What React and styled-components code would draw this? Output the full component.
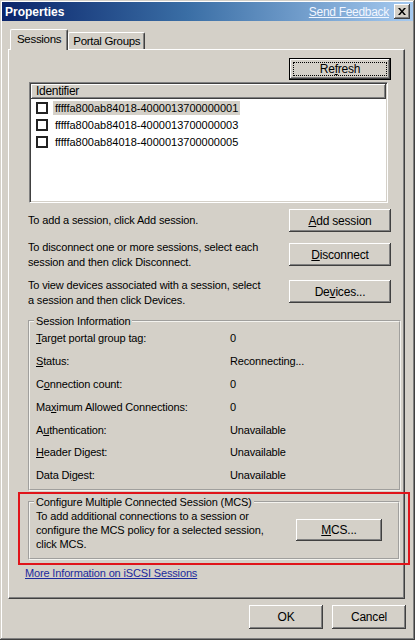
import React from 'react'
import styled, { createGlobalStyle } from 'styled-components'

const GlobalStyle = createGlobalStyle`
  html, body {
    margin: 0;
    padding: 0;
    background: #d4d0c8;
  }
  body {
    font-family: "Liberation Sans", Arial, sans-serif;
    font-size: 11px;
    letter-spacing: -0.15px;
    color: #000;
  }
`

const raised = `
  box-shadow: inset -1px -1px #404040, inset 1px 1px #ffffff,
    inset -2px -2px #808080, inset 2px 2px #d4d0c8;
`

const Window = styled.div`
  width: 415px;
  height: 640px;
  box-sizing: border-box;
  padding: 2px;
  background: #d4d0c8;
  display: flex;
  flex-direction: column;
  box-shadow: inset -1px -1px #404040, inset 1px 1px #d4d0c8,
    inset -2px -2px #808080, inset 2px 2px #ffffff;
`

const TitleBar = styled.div`
  height: 19px;
  display: flex;
  align-items: center;
  padding: 0 3px 0 3px;
  background: linear-gradient(to right, #0a246a 0%, #3a6ea5 45%, #a6caf0 100%);
`

const Title = styled.span`
  flex: 1;
  color: #fff;
  font-weight: bold;
  font-size: 12px;
  letter-spacing: 0;
`

const FeedbackLink = styled.a`
  color: #f2f6ff;
  font-size: 12px;
  letter-spacing: -0.3px;
  text-decoration: underline;
  margin-right: 5px;
`

const CloseButton = styled.button`
  width: 16px;
  height: 15px;
  padding: 0;
  border: none;
  background: #d4d0c8;
  ${raised}
  display: flex;
  align-items: center;
  justify-content: center;
`

const Body = styled.div`
  flex: 1;
  display: flex;
  flex-direction: column;
  padding: 8px 7px 0 6px;
`

const TabStrip = styled.div`
  display: flex;
  align-items: flex-end;
  height: 20px;
  padding-left: 2px;
  position: relative;
  z-index: 1;
`

const Tab = styled.div`
  font-size: 11.5px;
  letter-spacing: -0.3px;
  padding: 0 ${p => (p.$active ? '6px' : '4px')};
  height: ${p => (p.$active ? '21px' : '17px')};
  line-height: ${p => (p.$active ? '19px' : '17px')};
  margin-bottom: ${p => (p.$active ? '-1px' : '0')};
  background: #d4d0c8;
  border-top: 1px solid #fff;
  border-left: 1px solid #fff;
  border-right: 1px solid #404040;
  border-radius: 2px 2px 0 0;
  box-shadow: inset -1px 0 #808080;
  box-sizing: border-box;
`

const Panel = styled.div`
  width: 397px;
  height: 550px;
  box-sizing: border-box;
  border-top: 1px solid #fff;
  border-left: 1px solid #fff;
  border-right: 1px solid #404040;
  border-bottom: 1px solid #404040;
  box-shadow: inset -1px -1px #808080;
  padding: 8px 14px 0 19px;
  display: flex;
  flex-direction: column;
`

const Button = styled.button`
  width: ${p => p.$w || 102}px;
  height: ${p => p.$h || 23}px;
  font-family: "Liberation Sans", Arial, sans-serif;
  font-size: 12px;
  letter-spacing: -0.2px;
  color: #000;
  background: #d4d0c8;
  border: none;
  padding: 0;
  position: relative;
  flex-shrink: 0;
  ${raised}
  ${p =>
    p.$default &&
    `
    box-shadow: inset 0 0 0 1px #000, inset -2px -2px #404040, inset 2px 2px #ffffff,
      inset -3px -3px #808080;
    &::after {
      content: '';
      position: absolute;
      inset: 4px;
      border: 1px dotted #000;
    }
  `}
`

const Key = styled.u`
  text-decoration: underline;
`

const RefreshRow = styled.div`
  display: flex;
  justify-content: flex-end;
  margin-right: -1px;
`

const ListBox = styled.div`
  width: 359px;
  height: 121px;
  margin-top: 2px;
  margin-left: 1px;
  box-sizing: border-box;
  background: #fff;
  border-top: 1px solid #808080;
  border-left: 1px solid #808080;
  border-right: 1px solid #fff;
  border-bottom: 1px solid #fff;
  box-shadow: inset 1px 1px #404040, inset -1px -1px #d4d0c8;
  padding: 1px;
`

const ListHeader = styled.div`
  height: 15px;
  line-height: 15px;
  background: #d4d0c8;
  padding-left: 5px;
  font-size: 12px;
  letter-spacing: -0.3px;
  ${raised}
`

const Rows = styled.div`
  padding: 0 0 0 5px;
`

const ListRow = styled.div`
  display: flex;
  align-items: center;
  height: 17px;
  gap: 5px;
`

const Check = styled.span`
  width: 8px;
  height: 8px;
  border: 2px solid #222;
  background: #fff;
  flex-shrink: 0;
`

const Ident = styled.span`
  font-size: 11px;
  letter-spacing: 0;
  padding: 1px 2px;
  background: ${p => (p.$selected ? '#d4d0c8' : 'transparent')};
`

const Actions = styled.div`
  display: flex;
  flex-direction: column;
  margin-top: 6px;
  margin-right: -1px;
  gap: 11px;
`

const ActionRow = styled.div`
  display: flex;
  justify-content: space-between;
  align-items: flex-start;
  height: ${p => p.$h || 23}px;
`

const ActionText = styled.p`
  margin: ${p => p.$top ?? 4}px 0 0 0;
  font-size: 11px;
  line-height: 15px;
  width: 237px;
`

const GroupBox = styled.fieldset`
  margin: ${p => p.$mt || 0}px 0 0 0;
  width: ${p => p.$w || 373}px;
  height: ${p => p.$h}px;
  box-sizing: border-box;
  border: 2px groove #f4f3ef;
  padding: 0 6px;
  min-width: 0;
`

const Legend = styled.legend`
  font-size: 11px;
  line-height: 14px;
  padding: 0 2px;
  margin-left: -2px;
`

const InfoGrid = styled.div`
  display: grid;
  grid-template-columns: 194px 1fr;
  grid-auto-rows: 22.8px;
  align-items: center;
  font-size: 11px;
  margin-top: -1px;
`

const Annotated = styled.div`
  position: relative;
  margin-top: 4px;
  &::after {
    content: '';
    position: absolute;
    left: -10px;
    top: -3px;
    width: 392px;
    height: 73px;
    box-sizing: border-box;
    border: 2px solid #e0141a;
    pointer-events: none;
  }
`

const McsBody = styled.div`
  display: flex;
  justify-content: space-between;
  align-items: center;
  padding-right: 10px;
`

const McsText = styled.p`
  margin: 0;
  font-size: 11px;
  line-height: 14px;
  width: 245px;
`

const InfoLink = styled.a`
  display: block;
  margin: 6px 0 0 -3px;
  font-size: 11px;
  line-height: 14px;
  color: #1c2a9c;
  text-decoration: underline;
`

const Footer = styled.div`
  display: flex;
  justify-content: flex-end;
  gap: 9px;
  margin-top: 6px;
`

const sessions = [
  'fffffa800ab84018-4000013700000001',
  'fffffa800ab84018-4000013700000003',
  'fffffa800ab84018-4000013700000005'
]

const info = [
  [<><Key>T</Key>arget portal group tag:</>, '0'],
  [<><Key>S</Key>tatus:</>, 'Reconnecting...'],
  [<>C<Key>o</Key>nnection count:</>, '0'],
  [<>Ma<Key>x</Key>imum Allowed Connections:</>, '0'],
  [<>A<Key>u</Key>thentication:</>, 'Unavailable'],
  [<><Key>H</Key>eader Digest:</>, 'Unavailable'],
  [<>Data Di<Key>g</Key>est:</>, 'Unavailable']
]

export default function App() {
  return (
    <>
      <GlobalStyle />
      <Window>
        <TitleBar>
          <Title>Properties</Title>
          <FeedbackLink>Send Feedback</FeedbackLink>
          <CloseButton>
            <svg width="8" height="7" viewBox="0 0 8 7">
              <path d="M0 0h2l2 2.5L6 0h2L5 3.5 8 7H6L4 4.5 2 7H0l3-3.5z" fill="#000" />
            </svg>
          </CloseButton>
        </TitleBar>
        <Body>
          <TabStrip>
            <Tab $active>Sessions</Tab>
            <Tab>Portal Groups</Tab>
          </TabStrip>
          <Panel>
            <RefreshRow>
              <Button $default $h={22}>
                Re<Key>f</Key>resh
              </Button>
            </RefreshRow>
            <ListBox>
              <ListHeader>Identifier</ListHeader>
              <Rows>
                {sessions.map((s, i) => (
                  <ListRow key={s}>
                    <Check />
                    <Ident $selected={i === 0}>{s}</Ident>
                  </ListRow>
                ))}
              </Rows>
            </ListBox>
            <Actions>
              <ActionRow>
                <ActionText>To add a session, click Add session.</ActionText>
                <Button>
                  <Key>A</Key>dd session
                </Button>
              </ActionRow>
              <ActionRow $h={26}>
                <ActionText $top={-3}>
                  To disconnect one or more sessions, select each session and then click Disconnect.
                </ActionText>
                <Button>
                  <Key>D</Key>isconnect
                </Button>
              </ActionRow>
              <ActionRow $h={28}>
                <ActionText $top={-2}>
                  To view devices associated with a session, select a session and then click Devices.
                </ActionText>
                <Button>
                  De<Key>v</Key>ices...
                </Button>
              </ActionRow>
            </Actions>
            <GroupBox $mt={6} $h={177}>
              <Legend>Session Information</Legend>
              <InfoGrid>
                {info.map(([label, value], i) => (
                  <React.Fragment key={i}>
                    <span>{label}</span>
                    <span>{value}</span>
                  </React.Fragment>
                ))}
              </InfoGrid>
            </GroupBox>
            <Annotated>
              <GroupBox $w={372} $h={65}>
                <Legend>Configure Multiple Connected Session (MCS)</Legend>
                <McsBody>
                  <McsText>
                    To add additional connections to a session or configure the MCS policy for a
                    selected session, click MCS.
                  </McsText>
                  <Button $w={86} $h={22}>
                    <Key>M</Key>CS...
                  </Button>
                </McsBody>
              </GroupBox>
            </Annotated>
            <InfoLink>More Information on iSCSI Sessions</InfoLink>
          </Panel>
          <Footer>
            <Button $w={74} $h={24}>OK</Button>
            <Button $w={74} $h={24}>Cancel</Button>
          </Footer>
        </Body>
      </Window>
    </>
  )
}
